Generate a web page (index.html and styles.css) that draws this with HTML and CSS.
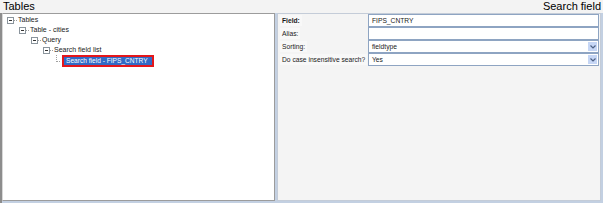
FILE: index.html
```html
<!DOCTYPE html>
<html>
<head>
<meta charset="utf-8">
<link rel="stylesheet" href="styles.css">
</head>
<body>
<div class="app">
  <div class="header">
    <span class="title">Tables</span>
    <span class="title">Search field</span>
  </div>
  <div class="main">
    <div class="tree">
      <div class="row" style="padding-left:4px"><span class="exp"></span><span class="dash"></span><span class="lbl">Tables</span></div>
      <div class="row" style="padding-left:16px"><span class="exp"></span><span class="dash"></span><span class="lbl">Table - cities</span></div>
      <div class="row" style="padding-left:28px"><span class="exp"></span><span class="dash"></span><span class="lbl">Query</span></div>
      <div class="row" style="padding-left:40px"><span class="exp"></span><span class="dash"></span><span class="lbl">Search field list</span></div>
      <div class="row sel-row" style="padding-left:53px"><span class="elbow"></span><span class="sel">Search field - FIPS_CNTRY</span></div>
    </div>
    <div class="props">
      <div class="form">
        <div class="plabel"><span class="ltext bold">Field:</span></div>
        <div class="field">FIPS_CNTRY</div>
        <div class="plabel"><span class="ltext">Alias:</span></div>
        <div class="field"></div>
        <div class="plabel"><span class="ltext">Sorting:</span></div>
        <div class="field combo">fieldtype<span class="btn"><svg width="6" height="4" viewBox="0 0 6 4"><path d="M0.5 0.5 L3 3 L5.5 0.5" fill="none" stroke="#4d6185" stroke-width="1.2"/></svg></span></div>
        <div class="plabel"><span class="ltext">Do case insensitive search?</span></div>
        <div class="field combo">Yes<span class="btn"><svg width="6" height="4" viewBox="0 0 6 4"><path d="M0.5 0.5 L3 3 L5.5 0.5" fill="none" stroke="#4d6185" stroke-width="1.2"/></svg></span></div>
      </div>
    </div>
  </div>
</div>
</body>
</html>
```
FILE: styles.css
```css
html, body {
  margin: 0;
  padding: 0;
  background: #f3f3f3;
}
.app {
  width: 603px;
  height: 203px;
  display: flex;
  flex-direction: column;
  font-family: "Liberation Sans", Arial, sans-serif;
  overflow: hidden;
}
.header {
  height: 13px;
  display: flex;
  justify-content: space-between;
  align-items: center;
  padding: 0 2px 0 3px;
  background: #f3f3f3;
}
.title {
  font-size: 11px;
  line-height: 13px;
  color: #000;
}
.main {
  flex: 1;
  display: flex;
  gap: 2px;
  background: #c3d0e2;
  border-left: 2px solid #8d8d8d;
  padding: 0 2px 2px 0;
}
.tree {
  width: 271px;
  background: #fff;
  border: 1px solid #9c9c9c;
  border-left: 1px solid #d8d8d8;
  padding-top: 1px;
  font-size: 7px;
}
.row {
  height: 10px;
  display: flex;
  align-items: center;
  color: #1a1a1a;
}
.exp {
  width: 5px;
  height: 5px;
  border: 1px solid #8a949c;
  background: #fff;
  position: relative;
  flex: none;
}
.exp::after {
  content: "";
  position: absolute;
  left: 1px;
  top: 2px;
  width: 3px;
  height: 1px;
  background: #333;
}
.dash {
  width: 3px;
  height: 0;
  border-top: 1px dotted #a0a0a0;
  margin: 0 1px 0 0;
  flex: none;
}
.lbl {
  line-height: 10px;
  white-space: nowrap;
}
.sel-row {
  height: 12px;
  align-items: stretch;
}
.elbow {
  width: 3px;
  height: 6px;
  border-left: 1px dotted #a0a0a0;
  border-bottom: 1px dotted #a0a0a0;
  flex: none;
  margin-right: 2px;
}
.sel {
  padding: 0 4px 0 2px;
  background: #316ac5;
  border: 2px solid #e3171b;
  color: #fff;
  font-size: 6.6px;
  line-height: 8px;
  white-space: nowrap;
}
.props {
  flex: 1;
  background: #f4f4f4;
  border: 1px solid #c4ccd8;
  padding: 0 1px 0 2px;
}
.form {
  display: grid;
  grid-template-columns: 88px 1fr;
  grid-auto-rows: 13px;
  font-size: 6.7px;
}
.plabel {
  display: flex;
  align-items: center;
}
.ltext {
  background: #f8f8f8;
  padding: 0 2px;
  line-height: 11px;
  white-space: nowrap;
  color: #1a1a1a;
}
.bold {
  font-weight: bold;
}
.field {
  background: #fff;
  border: 1px solid #8ea4c2;
  display: flex;
  align-items: center;
  justify-content: space-between;
  padding-left: 3px;
  padding-right: 1px;
  color: #1a1a1a;
}
.btn {
  width: 9px;
  height: 9px;
  background: #c6d6f5;
  display: flex;
  align-items: center;
  justify-content: center;
}
```
